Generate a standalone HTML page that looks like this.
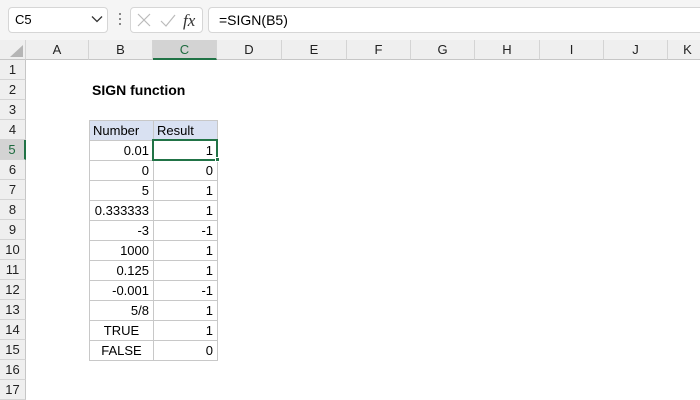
<!DOCTYPE html>
<html><head><style>
*{margin:0;padding:0;box-sizing:border-box}
body{width:700px;height:400px;overflow:hidden;background:#fff;font-family:"Liberation Sans",Arial,sans-serif;font-size:13px;color:#000;position:relative}
.a{position:absolute}
.tb{left:0;top:0;width:700px;height:40px;background:#f5f5f5}
.box{background:#fff;border:1px solid #d6d6d6;border-radius:4px}
.ch{top:40px;height:20px;background:#efefef;border-bottom:1px solid #c6c6c6;border-right:1px solid #d4d4d4;text-align:center;line-height:20px;font-size:13px;color:#222}
.rh{left:0;width:26px;height:20px;background:#efefef;border-right:1px solid #c6c6c6;border-bottom:1px solid #d4d4d4;text-align:center;line-height:20px;color:#222}
.b,.r{position:absolute;height:21px;line-height:20px;border:1px solid #c8c8c8;padding:0 4px;white-space:nowrap;text-align:right}
.b{left:89px;width:65px}
.r{left:153px;width:65px}
</style></head><body>
<div class="a tb"></div>
<div class="a box" style="left:8px;top:7px;width:100px;height:26px"></div>
<div class="a" style="left:15px;top:12px;font-size:13px">C5</div>
<svg class="a" style="left:91px;top:15px" width="12" height="8"><path d="M1 1.5L6 6.5L11 1.5" stroke="#333" stroke-width="1.3" fill="none"/></svg>
<div class="a" style="left:119px;top:13px;width:2px;height:2px;background:#888;box-shadow:0 5px 0 #888,0 10px 0 #888"></div>
<div class="a box" style="left:130px;top:7px;width:73px;height:26px"></div>
<svg class="a" style="left:137px;top:12px" width="62" height="18"><path d="M1 2L13 14M13 2L1 14" stroke="#bbb" stroke-width="1.2" fill="none"/><path d="M24 9L29 14L38 3" stroke="#bbb" stroke-width="1.2" fill="none"/><text x="46" y="14" font-family="Liberation Serif,serif" font-style="italic" font-size="17" fill="#333">fx</text></svg>
<div class="a box" style="left:208px;top:7px;width:500px;height:26px"></div>
<div class="a" style="left:219px;top:12px;font-size:14px">=SIGN(B5)</div>

<div class="a ch" style="left:0;width:26px"></div>
<svg class="a" style="left:8px;top:44px" width="16" height="14"><path d="M15 1L15 13L2 13Z" fill="#b5b5b5"/></svg>
<div class="a ch" style="left:26px;width:63px">A</div>
<div class="a ch" style="left:89px;width:64px">B</div>
<div class="a ch" style="left:153px;width:64px;background:#d3d3d3;border-bottom:2px solid #217346;color:#1e6b3f">C</div>
<div class="a ch" style="left:217px;width:65px">D</div>
<div class="a ch" style="left:282px;width:65px">E</div>
<div class="a ch" style="left:347px;width:64px">F</div>
<div class="a ch" style="left:411px;width:64px">G</div>
<div class="a ch" style="left:475px;width:65px">H</div>
<div class="a ch" style="left:540px;width:64px">I</div>
<div class="a ch" style="left:604px;width:64px">J</div>
<div class="a ch" style="left:668px;width:40px">K</div>

<div class="a rh" style="top:60px">1</div>
<div class="a rh" style="top:80px">2</div>
<div class="a rh" style="top:100px">3</div>
<div class="a rh" style="top:120px">4</div>
<div class="a rh" style="top:140px;background:#d3d3d3;border-right:2px solid #217346;color:#1e6b3f">5</div>
<div class="a rh" style="top:160px">6</div>
<div class="a rh" style="top:180px">7</div>
<div class="a rh" style="top:200px">8</div>
<div class="a rh" style="top:220px">9</div>
<div class="a rh" style="top:240px">10</div>
<div class="a rh" style="top:260px">11</div>
<div class="a rh" style="top:280px">12</div>
<div class="a rh" style="top:300px">13</div>
<div class="a rh" style="top:320px">14</div>
<div class="a rh" style="top:340px">15</div>
<div class="a rh" style="top:360px">16</div>
<div class="a rh" style="top:380px">17</div>

<div class="a" style="left:92px;top:82px;font-weight:bold;font-size:14px">SIGN function</div>

<div class="b" style="top:120px;background:#d9e1f2;text-align:left;padding-left:3px">Number</div><div class="r" style="top:120px;background:#d9e1f2;text-align:left;padding-left:3px">Result</div>
<div class="b" style="top:140px">0.01</div><div class="r" style="top:140px">1</div>
<div class="b" style="top:160px">0</div><div class="r" style="top:160px">0</div>
<div class="b" style="top:180px">5</div><div class="r" style="top:180px">1</div>
<div class="b" style="top:200px">0.333333</div><div class="r" style="top:200px">1</div>
<div class="b" style="top:220px">-3</div><div class="r" style="top:220px">-1</div>
<div class="b" style="top:240px">1000</div><div class="r" style="top:240px">1</div>
<div class="b" style="top:260px">0.125</div><div class="r" style="top:260px">1</div>
<div class="b" style="top:280px">-0.001</div><div class="r" style="top:280px">-1</div>
<div class="b" style="top:300px">5/8</div><div class="r" style="top:300px">1</div>
<div class="b" style="top:320px;text-align:center">TRUE</div><div class="r" style="top:320px">1</div>
<div class="b" style="top:340px;text-align:center">FALSE</div><div class="r" style="top:340px">0</div>
<div class="a" style="left:152px;top:139px;width:66px;height:22px;border:2px solid #217346"></div>
<div class="a" style="left:215px;top:157px;width:5px;height:5px;background:#217346;border:1px solid #fff"></div>
</body></html>
